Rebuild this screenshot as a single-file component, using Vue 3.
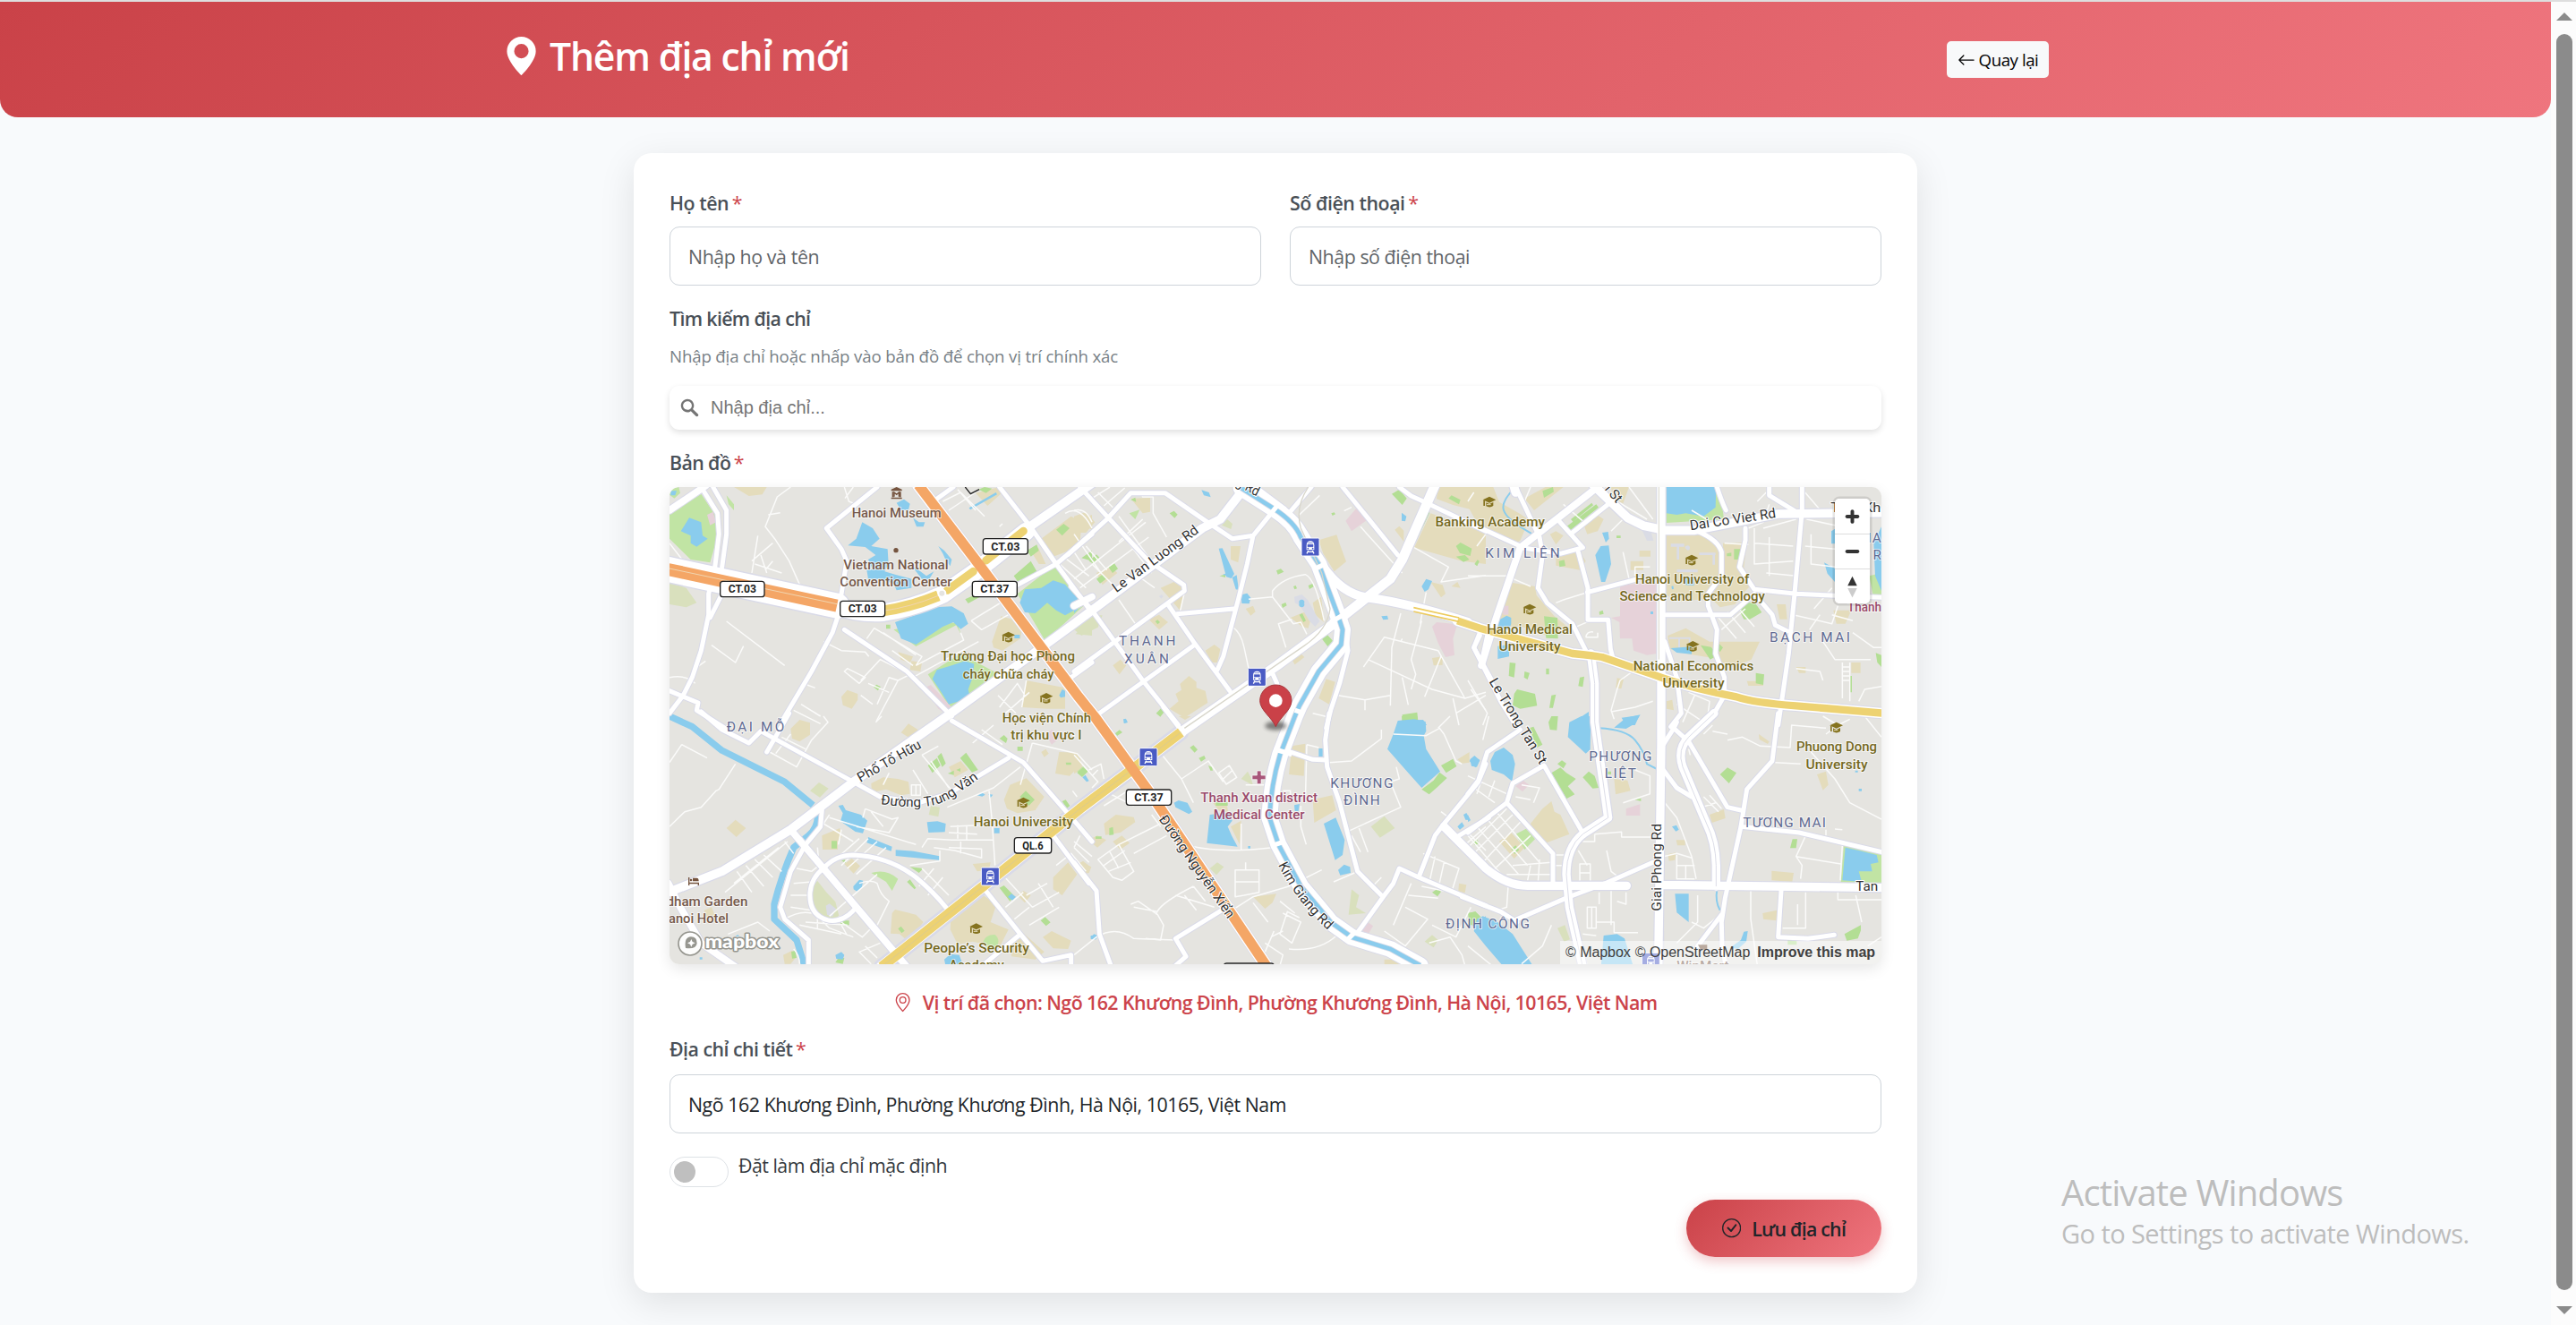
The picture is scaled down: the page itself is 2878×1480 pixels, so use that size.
<script setup>
import { ref } from 'vue'

const name = ref('')
const phone = ref('')
const query = ref('')
const detail = ref('Ngõ 162 Khương Đình, Phường Khương Đình, Hà Nội, 10165, Việt Nam')
const isDefault = ref(false)

// Map geometry is split into six tiles; dx/dy give each tile's origin.
const tiles = [
  {
    dx: 0, dy: 0,
    green: 'M24 130L130 65L180 140L190 190L160 295L95 285L24 215ZM215 70L240 100V120L222 100ZM1190 400L1315 303L1412 440L1283 557ZM890 670L1000 600L1120 665L970 790ZM775 520L850 576L985 505L1000 535L990 500L940 490ZM24 50L55 42L60 62L40 80L24 68Z',
    park: 'M1178 340L1235 290L1255 325L1200 372ZM1222 255L1255 235L1262 255L1235 275ZM1015 418L1065 395L1070 407L1025 432ZM750 503h14v14h-14zM708 712l10-8 14 8-10 12zM1320 185l25-20 20 15-25 25zM1405 280l35-25v35zM1060 50l20-8 25 5-20 15z',
    pale: 'M24 362L80 380L115 430L80 445L24 435ZM1385 535l55-55v60z',
    sand: 'M240 42H350L335 67L290 72ZM1105 560L1135 475L1210 495L1200 550L1140 590L1110 580ZM1220 690L1350 715V785H1290L1205 780ZM600 745L620 722L655 735V755L635 785L605 773ZM1270 215L1370 140L1405 160L1400 230L1350 260L1310 275ZM1390 155L1440 135V185ZM790 595L840 610L830 632L800 620ZM835 625L870 630L865 660L830 655ZM1050 62L1130 42L1140 60L1090 105ZM1240 265L1260 245L1285 300L1262 300Z',
    pink: 'M880 715L900 705L970 780L950 800L925 785ZM150 135L170 125L180 160L160 170Z',
    water: 'M62 190L90 145L130 160L135 205L152 215L115 242L95 230V205ZM622 238L650 215L670 160L705 180L728 215L700 240L755 250L758 300L745 325L780 335L835 350V380L785 388L775 365L730 350H690L685 320L705 318L690 285L715 270L680 243ZM785 95L810 83L830 98L825 118L800 120ZM840 145L860 160H880L875 175H852ZM925 240L945 255L970 285L965 307L950 287L940 265ZM835 305L865 325L885 340L910 325L895 350L870 350ZM780 495L850 470L910 445L970 442L1010 465L1025 500L1000 518L975 495L940 510L850 570L800 550ZM1198 430L1215 385L1270 380L1310 355L1350 368L1395 420L1390 450L1350 472L1320 455L1290 430L1250 465L1215 462ZM905 685L920 655L970 640L1015 625L1045 635L1040 680L1025 720L1030 740L995 760L960 770L935 730ZM28 55H48L43 70H28ZM1028 112L1118 60L1122 67L1032 118ZM1330 740L1340 720L1350 725V745L1335 748ZM1180 537h18v12h-18z',
    streets: 'M130 42L185 130L190 200L175 320L155 400L155 470L130 590L100 680L70 740L24 800M170 42L215 120L215 200L200 310M200 400L160 480M720 42L550 180L600 250L618 290L600 400L590 470L570 530L500 660L405 820M610 520L820 660L970 810M920 82L975 42M24 725L120 765L115 790L210 850M1130 42L1230 170L1320 300L1430 450M1190 370L1320 300L1440 200M1370 680L1440 630',
    minor: 'M430 42L385 75L345 175L380 220L425 290L465 380M320 205L300 330M300 290L370 230M310 300L400 330M330 270L350 330M370 290L345 320M355 135L395 128M610 42L625 90L650 100M640 42L612 80M215 492L410 640M165 572L245 630L272 575M540 560L600 590L680 595L692 610M685 550L710 515L870 610L850 640M740 530L850 605M770 590L840 640M850 640L1010 555L1000 530M840 680L1060 560M1035 490L1150 420M1035 490L1070 520L1160 470M610 660L620 650L680 680L660 700ZM665 690L730 620L830 670L790 690L760 680L720 770M665 740L705 770M690 700L760 730M790 690L718 825M485 705L512 715M440 790L530 835M465 770L530 810M940 90L1000 60L1080 140M960 120L1050 60M990 50L1050 120M1130 780L1190 700L1215 740M1150 800L1230 730M1125 740L1185 800M1220 690L1205 780M1350 130Q1400 100 1440 180M1320 290L1420 380M1350 280L1430 340M1380 260L1420 320M1130 175L1140 165M24 680Q80 670 110 700M110 650L145 625M24 230L70 290',
  },
  {
    dx: 1380, dy: 0,
    green: 'M185 130L220 118L205 150Z',
    park: 'M320 130l15-8 12 12-10 12zM50 290l25-22 10 10-22 20zM115 310l20-12 12 18-18 14zM75 350l20-15 12 15-20 15zM678 322l15-6 10 10-20 9zM1065 65l25-15 25 30-15 22zM1280 240l15-12 38 20-5 25-35-10zM1280 275l30-5 15 15-20 8zM830 550l18-14 20 22-18 18zM275 800l16-16 12 10-14 18zM1100 805l50-8 4 38-55 4zM785 372l14-6 4 10-14 8zM695 435l14-6 4 10-14 8zM735 375l8-3 4 10-8 3zM862 130l10-3 4 6-10 5zM1255 80l10-10 30 15-5 15zM755 470l10-5 12 25-8 5zM1345 300l8-12 4 5-6 14zM487 340l20-5 0 10zM190 85l15-8 3 15zM1185 122L1192 128L1138 240L1133 235ZM272 492l8-5 8 8-8 7z',
    pale: 'M495 170l18-20 18 15-5 18zM0 520L60 472H95L80 512L25 540Z',
    sand: 'M1220 42H1380V112L1350 122L1270 102L1215 82ZM1195 130L1380 195V300L1300 290L1140 245ZM820 220L880 202L890 232L912 292L872 325L835 265ZM190 80L255 78V125L230 130ZM0 140L40 125L70 160L40 195H0ZM290 380L335 360L370 385L355 455L320 415ZM75 330L125 310L145 330L95 370ZM250 485L285 470L315 495L285 520ZM440 590L470 570L490 585L480 630H462ZM130 640L155 620L175 640L152 670ZM340 735L360 722L355 702L385 675L410 695V715L440 725L448 765L370 815L320 785L350 760ZM730 620L760 600L772 612L740 637ZM820 750L845 685L875 695L855 770ZM725 480L775 460L795 480L785 515L765 510ZM1195 360L1235 370L1245 400L1230 412ZM1200 615L1235 610V638L1205 640ZM1075 185L1090 173L1105 188V225ZM525 240H558L550 295L525 285ZM575 450L600 440L608 460L592 473ZM800 430L828 410L838 495L808 470ZM1265 375L1285 360L1295 380Z',
    pink: 'M910 155L945 115L988 148L930 190ZM1200 510L1215 495L1285 502L1270 550L1275 605L1245 612L1220 565Z',
    plaza: 'M738 410L763 402L783 420L823 492L808 510L788 490L758 440L740 430ZM285 408l8-5 6 6-7 7z',
    water: 'M485 248L497 247L537 333L527 348L510 343ZM498 335L530 325V345ZM530 345L545 337L552 387L542 385ZM560 403L580 398L592 413L587 433L562 432ZM1165 375L1180 350L1200 357L1188 385L1175 393ZM427 52L452 60L458 76L435 70ZM1030 475L1050 473L1053 485L1036 487ZM1098 128L1114 140L1110 157L1098 155ZM0 400Q20 425 14 450L0 465ZM1085 840L1095 825L1170 822L1182 840ZM168 825l6-6 6 12-12 3zM755 432a9 9 0 1 1 16 0a9 9 0 1 1-16 0z',
    streets: 'M-20 268L110 150L190 62H305L440 155L530 215L600 205L665 125M600 205L580 300L550 420L500 610L480 655M20 42L110 140L250 290L368 370L370 390L0 660M-10 375L60 455L230 690L350 840M312 432L400 560L522 725M345 467L535 450M85 800L405 570M900 42L980 140L1085 270M1090 42L1130 72L1170 90L1380 190M720 130L795 42M660 655L680 700M1360 530L1340 580L1400 690M905 500L918 590L890 700L860 790L845 850',
    minor: 'M755 135L823 70M960 175L1100 330M905 122L930 110M585 418L665 410L735 500L760 495L780 535M665 410V390Q700 345 775 335Q810 350 838 490M710 580L685 500L730 485M530 510Q560 530 570 580L585 650M150 420L205 500M970 645L1040 545L1220 590L1310 750L1380 730M985 620L1200 720L1310 750M1095 465L1065 580L1060 775M1165 490L1130 620L1145 670L1130 720M885 740L975 755L1060 740M975 755V790M1100 680L1120 772M1175 745L1230 610M1140 245L1255 310L1230 360L1380 338M0 350L240 160M20 380L250 210M0 200L90 330M100 105L170 45M80 60L130 110M60 80L120 42M130 160L260 330M150 140L280 320M225 60L230 75L265 75V130L310 210M0 120Q40 110 60 160M150 225L230 150M1180 395L1160 500M800 800L850 812M1270 750L1290 840M1330 720L1380 790M270 380L200 330M355 460L370 395M870 385L890 382M1280 800L1380 740M1100 550L1095 560M40 240L110 320M60 300L130 370',
  },
  {
    dx: 2700, dy: 0,
    green: 'M665 42H845L858 150L665 162ZM1345 340L1386 330V415H1360Z',
    park: 'M330 175L430 100L438 110L342 188ZM345 150L415 95L420 103L352 158ZM868 265l15-3v12h-15zM892 250h22v35h-22zM912 460L930 430H962L985 462L945 485H925ZM255 475L300 480L302 550L262 548ZM155 735L165 720L225 735L232 775L175 785L150 773ZM140 630L160 632L155 680L137 675ZM190 660L207 665L200 687L188 680ZM262 650h10v20h-10zM375 680l15-3-5 35-15-3zM280 740l15-3-10 45h-12zM965 665l28 5-3 35-25-5zM835 560l20 20-10 15-15-15zM1367 598L1386 605V645L1372 630ZM1280 675h7v55h-7zM250 55L285 42L288 58L255 78ZM780 572L815 578L838 605L812 620ZM305 290l18-4 4 20-20 4zM22 300l10-14 6 4-8 16zM498 205h14v8h-14zM0 245L12 255L0 265ZM440 460l12-5 3 12-14 3z',
    sand: 'M0 42H85L105 92L175 132L205 152L175 222L145 237L45 187L0 107ZM665 195H795L845 235V365H940L895 435L845 445L815 415L715 425L665 405ZM855 230L935 228L925 310L945 375L885 435L855 405ZM130 360L225 375L230 405L290 475L340 515L262 540L182 510L102 508L82 478ZM670 540L730 515L810 560H978L950 620L890 645L820 615L730 600L675 585ZM275 200L295 190L320 205L295 235ZM295 260L375 258L395 290L375 320L295 305ZM385 160L425 130L455 150L435 190L400 200ZM190 80L260 42H320L222 120ZM545 290H588V320H545ZM575 255H612V275H575ZM500 682L522 686L514 718L496 715ZM1285 630H1316V665H1285ZM1225 455H1285L1265 500H1235ZM1035 435H1065L1070 485H1045ZM480 42H540L520 97L485 80ZM935 692H990V708H940ZM665 760L685 755L690 790L665 785ZM1100 645H1132V665H1110Z',
    pink: 'M480 480L510 475V370L635 362V600L600 605L555 590L550 550H510L508 495ZM115 440H136V470H118Z',
    plaza: 'M585 190L610 180L622 222L600 222ZM680 232h45v10h-45zM700 240h8v45h-8zM775 262h55v8h-55zM820 262h8v40h-8zM700 318h70v10h-70zM728 246a8 8 0 1 1 8 8zM675 545h70v6h-70zM705 551h6v28h-6zM740 545h6v25h-6z',
    water: 'M665 42H832L830 110L790 140L730 130L700 135L665 130ZM427 270L445 240L472 238L480 300L460 360H447ZM450 195L470 192L473 215L462 228ZM100 490L130 473L145 480V500L135 530H100ZM100 575L138 570V610L100 618ZM1218 190L1238 178V232H1218ZM1194 295L1230 315V360L1205 332ZM1360 230L1386 175V390L1365 340ZM725 345H758V372L728 370ZM340 840L360 825L405 795V840ZM515 815L575 807L560 840H530ZM680 582L750 577V602L700 597ZM612 459h9v9h-9zM682 375l6-2 2 10-6 2z',
    stream: 'M160 42Q110 90 120 120T200 190T235 250',
    streets: 'M160 42L240 210L250 270L235 380L265 430L350 500L400 600M0 160L175 240M300 150L385 245L310 265L180 245M350 195L470 100M370 260L402 380V487H470L478 585L485 612M400 395L570 350M1120 42V120L1095 400L1075 600L1040 840M835 42Q850 90 865 120M930 180V220L910 310L960 385L1100 400L1386 412M770 190Q840 220 850 260V340L805 400V440L835 520L830 600L860 680V740L820 810L790 840M665 470H880L960 400L1020 470L1030 505L1070 525M1010 42V70L1100 125M40 540L20 580L70 680L110 760L160 840M65 540L50 610M660 560L700 680L715 800L680 845',
    minor: 'M0 340L130 340L210 375M295 430L320 420L400 395M340 520L410 490M395 545H435V530M395 545Q400 525 420 528M500 720L510 690L580 640M500 720L480 790L490 820M480 795L560 780L620 760M700 770L790 830M740 730L810 760L800 840M760 740L720 830M940 180L990 160L1010 100M990 180L1100 150M1135 150L1230 170M1130 240L1230 250M1150 200V300L1230 310M1150 130L1230 120M960 230L1090 240M960 180V300L1090 290M1000 330L1100 340M1010 210V340M840 480L900 550M870 460L930 530M900 440L960 510M850 520L930 450M1160 450L1220 380M1145 520L1180 470M1090 470L1220 500L1240 440M1220 470L1290 490M1290 530L1360 580H1386M1190 560L1230 620H1350M1255 630V750M1280 630V760M1255 645h25M1255 660h25M1255 675h25M1255 690h25M1100 650L1180 660L1190 690M1310 760L1330 720L1386 710M0 690L65 800L50 840M540 350L520 260M320 100L390 160M480 190L540 130M450 60L600 150M540 42L620 150M20 60L0 90M30 240L60 200M560 340V310H610M210 42L190 90M970 90L1000 60M750 120L800 150M1130 60L1190 130M860 230L940 235',
  },
  {
    dx: 0, dy: 810,
    green: 'M700 525Q750 510 790 545L770 585L750 555ZM1075 755Q1085 730 1115 732Q1135 750 1120 775L1090 780Z',
    park: 'M890 165L920 140L932 165L905 190ZM922 135L935 123L950 158L938 170ZM998 140L1018 122L1058 180L1038 188ZM820 555l10-8 20 28-5 5zM830 505l45 5-15 15zM1130 575l15-8 35 35-15 18zM1198 270l20-20 30 30-20 20zM1268 685l15-12 18 18-15 12zM1390 190l20-18 17 12-20 20zM1340 285l12-5 14 20-10 8zM598 685h28v15h-28zM790 712l10-8 12 15-10 8zM567 418h18v25h-18zM432 790l13-5 5 25-15 2zM580 825l10-15 20 0-5 20zM1130 75l15-12 12 12-5 15zM957 192l20-10v15zM985 180l14-6v12zM1190 102h18v14h-18zM600 484l12-3 3 12zM1352 155h18v8h-16z',
    pale: 'M495 250L525 222L557 242L528 272ZM900 300L930 305L925 337L893 330ZM502 570L520 552L550 590L580 622L592 668L560 690L525 665L500 620Z',
    sand: 'M215 375L245 347L280 375L248 405ZM430 42L460 12L495 22V62L460 85L435 75ZM800 55L825 25L872 55L840 80ZM535 400L595 375L600 405L588 420V447H537ZM610 495L635 477L663 502L641 527ZM700 225L740 205L790 210L825 220L830 260L800 265L750 245L702 255ZM1145 280L1165 230L1220 208L1280 270L1250 315L1190 325L1155 310ZM1330 120L1390 122L1405 160L1365 200L1317 192ZM960 170L1000 150L1025 180L980 205ZM970 620L1030 570L1120 630L1100 690L1160 715L1130 775L1040 755L990 765L965 715ZM770 660L780 648L850 665L875 690L825 755L795 730L765 728ZM1175 740L1205 722L1280 790L1250 815L1170 805ZM1310 540L1360 490L1390 530L1340 600L1310 580ZM1275 740L1305 720L1370 752L1360 780L1310 778ZM1190 600L1210 585L1235 600L1215 625ZM1385 500L1410 485L1435 505L1405 530ZM1040 495L1100 490L1095 515L1055 520ZM1270 120L1285 110L1295 125L1280 137ZM140 650L165 640L182 680L155 697ZM405 800L435 785L450 805L430 830H410Z',
    pink: 'M1285 60L1305 45L1335 70L1305 95Z',
    plaza: 'M548 635L560 628L582 645L570 672L552 665ZM52 560l8-6 5 6v18l-12 2z',
    water: 'M590 300L605 297L615 315L665 330L687 350L672 392L647 387L597 352L605 325ZM690 405L770 437L767 452L685 424ZM782 448L842 452L929 469V482L782 468ZM887 355L922 352L950 360L947 388L892 390ZM640 570L660 548L673 551L668 576L653 588L641 580ZM580 800L600 790L610 800L605 815L583 813ZM945 815L965 797L995 800L1010 840H950ZM1158 605l12-10 15 10-12 12zM1112 375h18v17h-18zM1055 265l15-10 12 8-10 6zM1092 260l16 3-8 10zM1408 205l10-8 12 20-8 3zM245 738l8-6 5 6zM125 808h9v7h-9zM1436 735h8v12h-8z',
    streets: 'M130 -15L200 45L290 90L330 50L640 220L730 270M425 -10L350 120M535 315L530 370L480 430L430 520L395 640L410 680L490 750V840M650 640Q610 690 560 685Q490 670 495 590Q500 540 540 510Q580 465 640 465Q760 470 850 540Q910 590 950 640M970 15L1210 155L1380 350L1440 420M730 270L860 290L960 260L1160 140M1310 400L1430 560M1080 580L1200 730L1275 820L1370 800V840M1200 730L1080 830',
    minor: 'M65 95L150 140M65 95L24 155M24 370L75 320L130 305L180 250L190 245L245 160M360 120L450 170L500 80L555 20L540 0M400 70L480 110M380 125L430 60M250 520L300 590M280 500L340 570M310 480L370 540M340 465L400 520M240 560L390 440M210 590L420 420M560 340L850 430M560 330L540 360L640 420M680 310L770 345L790 340L760 390L650 370M680 310L672 340M700 320L740 370M600 500L690 410M620 510L720 420M650 530L750 440M580 480L660 410M600 380L590 430M870 440L890 410L970 415H1110M965 370L1060 365M990 365V410M1020 370V415M960 390L1055 395M910 440L980 450L1070 475V445L960 440M1000 420V460M955 305L1110 240L1200 170M1095 250L1105 350L1115 500M1240 90L1200 230M1240 90L1390 125L1440 180M870 130L980 260M840 180L890 260M900 150L960 240M870 130L925 100M1050 60L1120 110M1070 45L1140 95M1040 90L1110 30M830 500L930 485V450M870 510L960 600M910 510L860 570M940 540L890 600M560 670L720 530M600 690L670 740L700 710M660 560Q700 545 720 560Q730 600 760 620L720 700M450 510L500 520M440 560L500 555M430 600L490 600M430 640L500 650L560 710L640 740M480 690L620 700M520 660V715M600 700L620 735M460 700L600 730M410 420L440 460M410 680Q460 650 500 660M220 730L320 690L360 720M730 760L660 790L700 830M680 770L720 810M1130 520L1240 640M1220 600L1290 560M1240 640L1330 590M1260 560L1310 640M1180 680L1230 640M1320 500L1370 460L1420 520M1210 590L1150 640M1230 700L1330 640M835 230h30v35h-30zM850 230v35M760 190L740 230M1375 250L1390 270M930 710L980 640M520 440L525 500L500 520M440 780Q460 800 460 830M715 20L735 0',
  },
  {
    dx: 1380, dy: 810,
    green: 'M10 185L30 168L47 185L30 200Z',
    park: 'M137 58l15-12 10 8-18 12zM388 105l12-8 14 15-10 10zM418 140l18-8 5 10-15 10zM450 165l12 5 3 12-8 0zM1098 0h52v12l-50 4zM1165 245L1205 215L1225 188L1250 207L1215 240L1190 262ZM1230 165l40-22 12 25-35 22zM1200 590l18-12 12 10-12 16zM118 375l12-4 3 26-15 2zM72 403h20v8h-20zM1335 420l15-8 6 15-12 6zM1320 660L1345 655L1360 670L1350 700H1325ZM475 288h40v12h-40z',
    pale: 'M560 210L582 185L592 205L600 232ZM995 370L1040 335L1075 375L1025 407ZM930 580L955 600L945 640L978 660L920 665ZM455 510L480 490L502 505L477 532ZM1175 755L1200 733L1220 750L1205 775Z',
    sand: 'M0 130L20 140L30 180L0 192ZM730 100L775 92L770 200L720 195ZM800 280L865 265L878 315L805 357ZM525 370L560 350L555 430ZM100 360L140 330L200 338L205 355L155 390L105 398ZM130 420L160 400L186 425L155 447ZM48 415L78 400L108 415L78 440ZM600 605L678 595L665 625L640 645ZM465 290L510 288L517 322L487 318ZM20 490L58 505L50 525L35 528ZM1285 145L1325 120V155L1300 158ZM1290 560L1315 565L1310 592L1288 587ZM1040 815H1100V835H1040ZM350 0H392L372 12Z',
    pink: 'M955 710L977 685L1002 703L985 732Z',
    water: 'M335 290L350 282L380 290L396 320L385 328L340 305ZM445 425L455 330L520 322L530 350L515 370L528 400L548 437ZM583 435h8v8h-8zM820 108h13v27h-13zM738 298L756 294L752 318H740ZM837 360L877 340L907 415L900 465L875 482ZM885 515L905 497L925 505L927 525L892 533ZM1050 110L1070 60L1085 15L1140 10L1178 18L1180 50L1172 65L1180 110L1227 185L1165 240L1120 190ZM1327 145L1342 132L1360 148L1350 170L1332 167ZM1285 370L1300 355L1308 368L1293 380ZM1305 330L1315 324L1329 348L1312 347ZM55 740L67 730L79 735L74 748L62 749ZM1335 700L1380 670V755L1360 745ZM165 10l8-2 4 12-10 4z',
    plaza: 'M1130 130L1145 120L1152 150L1140 185L1128 170Z',
    streets: 'M300 -30L350 35M690 108L800 145L845 147M855 -10L842 80L848 170L890 290L950 520L1030 600M932 750L1040 600L1070 560L1090 510L1155 540L1380 635M1155 540L1210 400L1240 360L1355 220L1380 160M1290 400L1390 340M0 490L75 585L85 730L125 840M495 650L340 745L375 805L335 840',
    minor: 'M390 435Q500 460 665 440M295 130L360 210L400 290M360 210L450 150L500 220M485 190L520 165L545 205L510 228ZM500 210L532 180M575 230H640M540 515H620V590L570 600L540 605ZM540 555H620M575 490V515M560 360V450M530 650L600 605L720 570L830 515M600 625L650 690M700 660L760 690L730 760L690 730L715 655L755 675M640 760L700 800L690 835M670 720L640 790M690 620L740 660M720 780Q820 790 880 735M660 740L700 720M780 95L775 290M780 95L820 105M760 300V370L778 430M855 155L930 150L1030 75V45M920 385L1095 305L1060 220L1090 210L1080 170M930 400L960 455M955 375L985 455M870 555L940 525M1070 60L1180 65L1225 40L1240 60L1280 150L1300 160M1220 40L1260 0M1170 460L1290 510L1265 590L1165 570M1210 470L1190 560M1240 490L1220 580M1120 600L1220 610M1110 640L1185 680L1110 770L1040 720M1130 560L1070 700M1200 700L1280 740L1330 640M1190 760L1260 740L1300 800L1310 835M1300 410L1360 470M1320 390L1380 450M1300 440L1380 370M0 800L75 740Q140 700 200 745L340 750M190 630L215 620L280 665L300 700L290 750L240 745M200 640L280 655M275 665Q280 630 400 570M370 600L410 650M340 600L470 640M400 570L440 620M80 480L150 430L200 520L160 550L130 540ZM100 500L170 450M115 520L190 490M120 455L150 510M200 460L310 400M150 430L290 360M260 330L290 370M0 440L50 490M20 400L0 440M0 420L60 470M100 300L180 250M120 260L200 300M0 130L80 220L60 240M50 180L90 160L100 210M60 200L80 180M1230 320L1250 335M1000 570L1030 540M700 250H725V285',
  },
  {
    dx: 2700, dy: 810,
    green: 'M1250 557L1260 430L1386 458V560ZM160 395L195 377L225 412L190 447Z',
    park: 'M270 20L280 0H302L298 47L275 45ZM205 40L220 35L250 95L232 105ZM280 190L310 172L330 190L362 210L335 235L358 262L330 277ZM300 160l15-12 15 10-10 17zM385 205L405 185L425 200L438 240L418 242ZM15 420l12-8 10 10-12 10zM145 445l15-12 12 15-15 14zM845 195L870 172L900 190L875 225ZM1080 442L1088 412H1104L1100 442ZM1262 730L1317 700V718L1307 745L1270 752ZM560 280l20-5v10zM0 660L25 655L45 675L25 690ZM1072 750h30v16h-30zM468 185h12v10h-12z',
    pale: 'M300 710L325 700L342 748L322 755Z',
    sand: 'M210 360L250 310L280 285L290 320L310 330L340 395L260 425L212 380ZM105 420L145 390L190 440L155 477ZM490 210L535 215L545 250L495 262ZM810 330L858 312L863 342L818 357ZM1018 518L1092 525L1087 555L1018 550ZM988 660L1035 650V685L990 680ZM1170 195L1200 185L1208 230L1190 248ZM670 462L697 457L694 482L674 485ZM698 415H728V433H702ZM975 60L1010 85L1005 93L977 78Z',
    pink: 'M160 235L185 215L205 230L183 252ZM530 310L577 295V333H530Z',
    water: 'M75 150L90 120L120 105L150 130L158 160L148 218L120 195L80 180ZM5 150L20 135L40 147L25 172ZM335 70L340 20L380 0H412L410 112L395 125ZM490 38L530 5L578 -5L560 25L530 42ZM30 680L50 670L100 690L150 730L220 840H120L60 770L20 720ZM446 840L455 735L500 730L525 745L555 840ZM694 595H740V690L700 658ZM880 775L915 750L925 722L938 720L933 755L905 780ZM684 370l15-5 8 15-10 6zM1255 550L1265 440L1310 450L1370 465L1376 490L1350 495L1355 520L1310 520L1320 555ZM1298 182h9v6h-9zM1310 243h10v8h-10zM0 330l8 20-8 4z',
    plaza: 'M625 640h8v12h-8zM650 720h8v100h-8z',
    stream: 'M440 40Q530 45 560 80T600 160L640 180M835 580Q828 620 845 650',
    streets: 'M255 165L150 225L130 290L285 460V560M255 165L390 400M0 390L130 290M175 45L65 120L35 215L0 260M165 680L340 605L460 560L620 490M-20 605L110 655L165 690M655 95L690 40L740 85L870 305L915 315M690 40L700 20M655 180L700 240L750 270M1040 -10L1020 150L935 245L915 370L862 610L850 690L852 770L865 840M915 370L1110 390L1386 455M1050 585L1040 740L1140 745L1228 733M850 665L770 770',
    minor: 'M0 440L130 310M20 460L150 330M50 490L180 350M80 520L210 400M60 340L200 500M30 370L170 530M95 320L240 490M0 400L120 540M210 500L200 550M240 480L235 560M150 500L280 490M130 530L280 530M290 465H325M290 500H325M0 200L130 260M20 240L90 290M50 200L30 260M90 215L70 270M180 230L240 240L220 290M160 270L210 280M425 395L515 388V405H615M385 420H425V395M375 495H410V555H375ZM375 525h35M465 450L480 520L500 535M370 450L400 500M440 590V630M530 590V630L500 620M400 640h30v70h-30zM415 640v70M430 690H490V725H570M480 580V700M660 290L700 340L750 470L765 545M700 465V545H760M700 500h60M730 500v45M655 470L700 460L750 475M1030 155L1115 160M870 80L920 70L980 100L1080 105L1085 30L1200 40M1200 60L1240 30L1280 10M1150 120L1230 210L1280 290L1386 345M1130 405L1100 470L1120 500L1115 545M1200 380V400M1230 378L1255 380M1100 470L1250 495M1255 430L1248 550M948 580V680L970 835M1132 590V710H1055M1105 630V700M1240 580V615H1386M1300 600L1320 690M790 270L840 320M760 290L800 340M810 265L850 310M770 310L830 290M820 50L870 60M820 30L790 60M740 110L745 130M520 290L610 260V200L560 180M135 570L130 640L100 650M180 830L250 770L280 700M700 760L770 690V600M750 690L790 710L840 670M370 720L400 835M385 730L430 735M1340 770L1386 740M70 0L50 80M0 770L80 835M1190 0L1240 30M1330 0L1386 70',
  },
]

const layers = ['pale', 'sand', 'green', 'park', 'pink', 'plaza', 'water']

const roads = {
  white: 'M24 120L145 38M1380 440L1440 410',
  wide: 'M2010 -10L1940 60L1870 150L1810 180L1380 500L1250 595L960 805L640 1030L430 1190L200 1330L20 1400',
  diag: 'M430 1190L820 1650M20 1370L60 1450L130 1570L245 1650',
  link: 'M1210 190L1440 30M2840 -10L2860 60',
  right: 'M3120 35L3235 145L3290 172L3360 187H3460L3740 132L4090 128',
  tonThat: 'M3150 30L2875 245L2795 480L2745 640',
  tanMai: 'M2620 1180L2760 1320Q2830 1378 2900 1378H3232M3350 1375L4090 1385',
  river: 'M1940 45L2050 115Q2120 160 2140 210L2200 300L2260 460L2280 520L2275 570L2200 660L2135 775L2120 810L2070 940Q2040 1040 2035 1150L2065 1240L2140 1380Q2200 1450 2240 1500L2310 1550L2440 1590L2540 1645',
  ringWest: 'M1960 30L2080 120L2150 200L2215 310Q2280 400 2360 412Q2500 430 2700 495',
  ring: 'M2665 490L2740 515L3050 600Q3110 605 3150 612L3320 670Q3440 715 3600 745Q3660 765 3800 775L4090 800',
  ql6: 'M735 1650L1100 1360L1400 1120L1560 1000L1738 864',
  ql6East: 'M1738 864L2060 640L2250 500L2440 350L2480 285L2590 35',
  rail: 'M1750 850L2150 575Q2230 520 2238 450L2210 330L2140 180Q2120 110 2165 42',
  ct37: 'M858 35L1060 300L1395 745L1455 820L1640 1075L2030 1655',
  ct03: 'M20 318L585 440',
  ct03East: 'M585 440Q650 468 740 463Q850 445 940 402L1050 325L1220 190',
  giaiPhong: 'M3348 30V900L3338 1650',
  dual: 'M3112 600L3125 700V830L3170 1150L3085 1205Q3030 1250 3030 1340L3040 1450L3085 1650M3525 800L3440 880Q3400 920 3420 980L3500 1170Q3530 1230 3532 1310V1380',
}

const labels = [
  ['poi', 785, 145, 300, 'Hanoi Museum'],
  ['poi', 783, 319, 352, 'Vietnam National'],
  ['poi', 783, 376, 376, 'Convention Center'],
  ['edu', 1158, 625, 450, 'Trường Đại học Phòng'],
  ['edu', 1160, 683, 305, 'cháy chữa cháy'],
  ['edu', 1288, 831, 298, 'Học viện Chính'],
  ['edu', 1287, 888, 238, 'trị khu vực I'],
  ['edu', 1210, 1180, 334, 'Hanoi University'],
  ['edu', 1053, 1602, 353, 'People’s Security'],
  ['edu', 1053, 1660, 185, 'Academy'],
  ['edu', 2774, 173, 367, 'Banking Academy'],
  ['edu', 3452, 366, 382, 'Hanoi University of'],
  ['edu', 3452, 424, 487, 'Science and Technology'],
  ['edu', 2907, 533, 287, 'Hanoi Medical'],
  ['edu', 2907, 591, 207, 'University'],
  ['edu', 3456, 656, 404, 'National Economics'],
  ['edu', 3456, 714, 207, 'University'],
  ['edu', 3936, 928, 270, 'Phuong Dong'],
  ['edu', 3936, 986, 207, 'University'],
  ['med', 2000, 1097, 392, 'Thanh Xuan district'],
  ['med', 2000, 1155, 306, 'Medical Center'],
  ['med', 4029, 458, 114, 'Thanh'],
  ['poi', 106, 1445, 360, 'Wyndham Garden'],
  ['poi', 106, 1503, 232, 'Hanoi Hotel'],
  ['poi', 3487, 1662, 175, 'WinMart'],
  ['area', 1625, 572, 190, 'THANH'],
  ['area', 1623, 632, 150, 'XUÂN'],
  ['area', 2883, 279, 250, 'KIM LIÊN'],
  ['area', 3846, 562, 270, 'BẠCH MAI'],
  ['area', 2344, 1050, 210, 'KHƯƠNG'],
  ['area', 2344, 1107, 122, 'ĐÌNH'],
  ['area', 2766, 1522, 282, 'ĐỊNH CÔNG'],
  ['area', 3211, 960, 210, 'PHƯƠNG'],
  ['area', 3211, 1018, 106, 'LIỆT'],
  ['area', 3761, 1181, 277, 'TƯƠNG MAI'],
  ['area', 312, 862, 194, 'ĐẠI MỖ'],
  ['area', 4052, 227, 66, 'HA'],
  ['area', 4072, 285, 52, 'R'],
  ['road', 4037, 1395, 75, 'Tan'],
  ['road', 4000, 127, 168, 'Trần Kh'],
]

// start x, baseline y, rotation, length, text
const streetNames = [
  [1522, 397, -36.2, 345, 'Le Van Luong Rd'],
  [3446, 187, -8.5, 291, 'Dai Co Viet Rd'],
  [3347, 1463, -90, 293, 'Giai Phong Rd'],
  [664, 1032, -29.5, 238, 'Phố Tố Hữu'],
  [1663, 1155, 55.2, 408, 'Đường Nguyễn Xiển'],
  [2770, 694, 58.5, 328, 'Le Trong Tan St'],
  [3148, 38, 50, 78, 'n St'],
  [1900, 26, 27, 104, 'ng Rd'],
]

const shields = [
  [194, 358, 148, 'CT.03'],
  [596, 424, 150, 'CT.03'],
  [1075, 215, 150, 'CT.03'],
  [1039, 358, 150, 'CT.37'],
  [1555, 1056, 151, 'CT.37'],
  [1180, 1217, 124, 'QL.6'],
]
const caps = [[1160, 545], [1287, 750], [1210, 1100], [1052, 1522], [2772, 92], [3450, 287], [2907, 452], [3454, 576], [3935, 848]]
const trains = [[2142, 213], [1963, 649], [1599, 917], [1069, 1317], [3283, 1603]]
</script>

<template>
  <div class="screen">
    <div class="page">
      <header class="header">
        <div class="header-inner">
          <h1 class="title">
            <svg class="title-icon" viewBox="0 0 16 16" fill="currentColor"><path d="M8 16s6-5.686 6-10A6 6 0 0 0 2 6c0 4.314 6 10 6 10m0-7a3 3 0 1 1 0-6 3 3 0 0 1 0 6" /></svg>
            <span>Thêm địa chỉ mới</span>
          </h1>
          <button class="back" type="button">
            <svg viewBox="0 0 16 16" fill="currentColor"><path fill-rule="evenodd" d="M15 8a.5.5 0 0 0-.5-.5H2.707l3.147-3.146a.5.5 0 1 0-.708-.708l-4 4a.5.5 0 0 0 0 .708l4 4a.5.5 0 0 0 .708-.708L2.707 8.5H14.5A.5.5 0 0 0 15 8" /></svg>
            <span>Quay lại</span>
          </button>
        </div>
      </header>

      <main class="card">
        <div class="row">
          <div class="field">
            <label class="label ls-name">Họ tên <i>*</i></label>
            <input v-model="name" class="input ls-ph-name" placeholder="Nhập họ và tên">
          </div>
          <div class="field">
            <label class="label ls-phone">Số điện thoại <i>*</i></label>
            <input v-model="phone" class="input ls-ph-phone" placeholder="Nhập số điện thoại">
          </div>
        </div>

        <label class="label search-label">Tìm kiếm địa chỉ</label>
        <p class="hint">Nhập địa chỉ hoặc nhấp vào bản đồ để chọn vị trí chính xác</p>
        <div class="search">
          <svg viewBox="0 0 18 18"><path d="M7.4 2.5c-2.7 0-4.9 2.2-4.9 4.9s2.2 4.9 4.9 4.9c1 0 1.8-.2 2.5-.8l3.7 3.7c.2.2.4.3.8.3.7 0 1.1-.4 1.1-1.1 0-.3-.1-.5-.3-.8L11.4 10c.4-.8.8-1.6.8-2.5.1-2.8-2.1-5-4.8-5zm0 1.6c1.8 0 3.2 1.4 3.2 3.2s-1.4 3.2-3.2 3.2-3.3-1.3-3.3-3.1 1.4-3.3 3.3-3.3z" /></svg>
          <input v-model="query" placeholder="Nhập địa chỉ...">
        </div>

        <label class="label map-label">Bản đồ <i>*</i></label>
        <div class="map">
          <svg class="map-canvas" viewBox="24 42 4062 1599" preserveAspectRatio="none">
            <defs>
              <g id="cap">
                <path d="M-22 -7L0 -18L22 -7L0 3Z" /><path d="M-20 -6V13H-15V-4Z" />
                <path d="M-11 2L0 7L13 1V13Q1 21 -11 14Z" /><path d="M-9 9H5" stroke="#e4dcbc" stroke-width="3" />
              </g>
              <g id="train">
                <rect width="60" height="60" rx="4" fill="#4a5bc4" stroke="#fff" stroke-width="3" />
                <path d="M17 40V25Q17 10 30 10Q43 10 43 25V40Z" fill="#fff" /><path d="M22 16H38M21 22H39V29H21Z" fill="#4a5bc4" stroke="#4a5bc4" stroke-width="2" />
                <circle cx="22" cy="35" r="2.6" fill="#4a5bc4" /><circle cx="38" cy="35" r="2.6" fill="#4a5bc4" />
                <path d="M23 42L18 52M37 42L42 52M21 46H39" stroke="#fff" stroke-width="4" fill="none" />
              </g>
              <path id="trung-van" d="M731 1105C830 1116 905 1125 975 1080Q1030 1042 1095 995" />
              <path id="kim-giang" d="M2064 1308Q2125 1435 2250 1544" />
              <filter id="soft" x="-50%" y="-50%" width="200%" height="200%"><feGaussianBlur stdDeviation="7" /></filter>
            </defs>
            <rect x="0" y="0" width="4200" height="1700" fill="#e5e4e0" />
            <g v-for="layer in layers" :key="layer">
              <path v-for="(t, i) in tiles" :key="i" :class="layer" :d="t[layer]" :transform="`translate(${t.dx} ${t.dy})`" />
            </g>
            <g fill="none" stroke-linejoin="round">
              <path d="M20 808L100 845L200 925L320 985L410 1030L505 1108" class="canal" />
              <path d="M520 1130Q525 1180 490 1210L440 1250Q400 1340 375 1440V1490L450 1560L478 1650" class="canal" />
              <path v-for="(t, i) in tiles" :key="'m' + i" class="minor" :d="t.minor" :transform="`translate(${t.dx} ${t.dy})`" />
              <path v-for="(t, i) in tiles" :key="'w' + i" class="stream" :d="t.stream" :transform="`translate(${t.dx} ${t.dy})`" />
              <g class="casing">
                <path v-for="(t, i) in tiles" :key="'c' + i" stroke-width="21" :d="t.streets" :transform="`translate(${t.dx} ${t.dy})`" />
                <path stroke-width="36" :d="roads.wide + roads.link + roads.ringWest + roads.right" />
                <path stroke-width="29" :d="roads.diag + roads.white + roads.tonThat" />
                <path stroke-width="35" :d="roads.tanMai + roads.dual + roads.giaiPhong" />
                <path stroke-width="38" :d="roads.ql6East" />
                <path stroke-width="60" :d="roads.river" />
                <path stroke-width="92" :d="roads.ct03" />
                <path stroke-width="66" :d="roads.ct03East" />
                <path stroke-width="46" :d="roads.ct37" />
                <path stroke-width="54" :d="roads.ql6" />
                <path stroke-width="40" :d="roads.ring" />
              </g>
              <g class="fill">
                <path v-for="(t, i) in tiles" :key="'f' + i" stroke-width="15" :d="t.streets" :transform="`translate(${t.dx} ${t.dy})`" />
                <path stroke-width="29" :d="roads.wide + roads.link + roads.right" />
                <path stroke-width="23" :d="roads.diag + roads.white + roads.tonThat" />
                <path stroke-width="28" :d="roads.tanMai + roads.dual + roads.giaiPhong" />
                <path stroke-width="54" :d="roads.river" />
                <path stroke-width="30" :d="roads.ringWest" />
                <path stroke-width="32" :d="roads.ql6East" />
                <path stroke-width="84" :d="roads.ct03" />
                <path stroke-width="58" :d="roads.ct03East" />
                <path stroke-width="38" :d="roads.ql6" />
                <path stroke-width="34" :d="roads.ring" />
                <path stroke-width="42" :d="roads.ct37" />
              </g>
              <path :d="roads.river" stroke="#dcdde8" stroke-width="19" />
              <path :d="roads.river" stroke="#8acced" stroke-width="14" />
              <path :d="roads.dual" stroke="#dcdde8" stroke-width="3" />
              <path :d="roads.rail" stroke="#d8d6cb" stroke-width="4" />
              <path d="M3340 42V620" stroke="#d8d6cb" stroke-width="3" />
              <path :d="roads.ql6" stroke="#edd272" stroke-width="34" />
              <path :d="roads.ql6" stroke="#dccb8f" stroke-width="3" />
              <path :d="roads.ring" stroke="#edd272" stroke-width="25" />
              <path d="M2518 446L2670 480M2518 459L2670 493" stroke="#edcb5c" stroke-width="5" />
              <path d="M740 457Q830 445 925 406" stroke="#edd272" stroke-width="36" />
              <path d="M955 388L1042 325M1085 288L1210 190" stroke="#edd272" stroke-width="27" stroke-linecap="round" />
              <path :d="roads.ct03" stroke="#f4a666" stroke-width="42" />
              <path d="M24 315L585 434M740 457Q830 445 925 406" stroke="#f0d5b0" stroke-width="3" />
              <path :d="roads.ct37" stroke="#f4a666" stroke-width="34" />
              <circle cx="937" cy="398" r="12" fill="#e5e4e0" stroke="#fff" stroke-width="6" />
              <path d="M2050 920L2110 938M2040 1245L2078 1232M2040 130L2065 100M2190 315L2215 303M2120 790L2150 800M2290 1565L2325 1530M2240 495L2300 460" stroke="#fff" stroke-width="16" />
              <path d="M1015 42L1033 65L1062 50" stroke="#222" stroke-width="4" />
              <rect x="1882" y="1638" width="168" height="52" rx="9" fill="#fff" stroke="#222" stroke-width="4" />
            </g>

            <g fill="#85731f"><use v-for="(c, i) in caps" :key="i" href="#cap" :x="c[0]" :y="c[1]" /></g>
            <g fill="#75543f">
              <path d="M767 50L785 42L803 50V55H767ZM770 58H776V76H770ZM794 58H800V76H794ZM767 77H803V82H767Z" />
              <path d="M777 74V60L785 67L793 60V74" fill="none" stroke="#75543f" stroke-width="4" />
              <circle cx="783" cy="254" r="8" />
              <path d="M87 1350H91V1367H123V1377H119V1372H91V1377H87ZM102 1352H116Q122 1353 122 1363H102Z" /><circle cx="96" cy="1359" r="4" />
              <path d="M3471 1576H3502V1592H3480Z" />
            </g>
            <path d="M1993 993H2007V1008H2022V1022H2007V1037H1993V1022H1977V1008H1993Z" fill="#a8567a" stroke="#fff" stroke-width="2" />

            <text v-for="(l, i) in labels" :key="'l' + i" :class="['lbl', l[0]]" :x="l[1]" :y="l[2]" :textLength="l[3]" :lengthAdjust="l[0] === 'area' ? 'spacing' : 'spacingAndGlyphs'" text-anchor="middle">{{ l[4] }}</text>
            <text v-for="(s, i) in streetNames" :key="'s' + i" class="lbl road" :transform="`translate(${s[0]} ${s[1]}) rotate(${s[2]})`" :textLength="s[3]" lengthAdjust="spacingAndGlyphs">{{ s[4] }}</text>
            <text class="lbl road"><textPath href="#trung-van">Đường Trung Văn</textPath></text>
            <text class="lbl road"><textPath href="#kim-giang">Kim Giang Rd</textPath></text>

            <use v-for="(t, i) in trains" :key="'t' + i" href="#train" :x="t[0]" :y="t[1]" />
            <g v-for="(s, i) in shields" :key="'h' + i">
              <rect :x="s[0]" :y="s[1]" :width="s[2]" height="52" rx="9" fill="#fff" stroke="#222" stroke-width="4" />
              <text class="shield" :x="s[0] + s[2] / 2" :y="s[1] + 39" :textLength="s[2] - 54" lengthAdjust="spacingAndGlyphs" text-anchor="middle">{{ s[3] }}</text>
            </g>

            <ellipse cx="2056" cy="842" rx="36" ry="15" fill="#000" opacity=".45" filter="url(#soft)" />
            <path d="M2056 845C2044 815 2003 790 2003 758A53 53 0 0 1 2109 758C2109 790 2068 815 2056 845Z" fill="#ca4148" stroke="#a9363c" stroke-width="3" />
            <circle cx="2056" cy="758" r="22" fill="#fff" />

            <g>
              <circle cx="93" cy="1572" r="39" fill="#fff" fill-opacity=".9" stroke="#96968f" stroke-width="5" />
              <path d="M78 1587Q72 1550 96 1549Q117 1550 116 1571Q113 1592 78 1587Z" fill="#96968f" />
              <path d="M97 1557L101 1566L110 1570L101 1574L97 1583L93 1574L84 1570L93 1566Z" fill="#fff" />
              <text class="wordmark" x="143" y="1588" textLength="248" lengthAdjust="spacingAndGlyphs">mapbox</text>
            </g>
          </svg>
          <div class="zoom">
            <button type="button"><svg viewBox="0 0 29 29"><path d="M14.5 8.5c-.75 0-1.5.75-1.5 1.5v3h-3c-.75 0-1.5.75-1.5 1.5S9.250 16 10 16h3v3c0 .75.75 1.500 1.500 1.500S16 19.750 16 19v-3h3c.75 0 1.500-.75 1.500-1.500S19.750 13 19 13h-3v-3c0-.75-.75-1.500-1.500-1.500z" /></svg></button>
            <button type="button"><svg viewBox="0 0 29 29"><path d="M10 13c-.75 0-1.500.75-1.500 1.500S9.250 16 10 16h9c.75 0 1.500-.75 1.500-1.500S19.750 13 19 13h-9z" /></svg></button>
            <button type="button"><svg viewBox="0 0 29 29"><path d="M10.500 14l4-8 4 8h-8z" /><path d="M10.500 16l4 8 4-8h-8z" fill="#ccc" /></svg></button>
          </div>
          <div class="attribution"><span>© Mapbox</span><span>© OpenStreetMap</span><b>Improve this map</b></div>
        </div>

        <p class="selected">
          <svg viewBox="0 0 16 16" fill="currentColor"><path d="M12.166 8.940c-.524 1.062-1.234 2.120-1.960 3.070A32 32 0 0 1 8 14.580a32 32 0 0 1-2.206-2.570c-.726-.950-1.436-2.008-1.960-3.070C3.304 7.867 3 6.862 3 6a5 5 0 0 1 10 0c0 .862-.305 1.867-.834 2.940M8 16s6-5.686 6-10A6 6 0 0 0 2 6c0 4.314 6 10 6 10" /><path d="M8 8a2 2 0 1 1 0-4 2 2 0 0 1 0 4m0 1a3 3 0 1 0 0-6 3 3 0 0 0 0 6" /></svg>
          <span>Vị trí đã chọn: Ngõ 162 Khương Đình, Phường Khương Đình, Hà Nội, 10165, Việt Nam</span>
        </p>

        <label class="label detail-label">Địa chỉ chi tiết <i>*</i></label>
        <input v-model="detail" class="input ls-detail">

        <div class="default">
          <button type="button" class="switch" :class="{ on: isDefault }" @click="isDefault = !isDefault"><span /></button>
          <span class="default-text">Đặt làm địa chỉ mặc định</span>
        </div>

        <div class="actions">
          <button type="button" class="save">
            <svg viewBox="0 0 16 16" fill="currentColor"><path d="M8 15A7 7 0 1 1 8 1a7 7 0 0 1 0 14m0 1A8 8 0 1 0 8 0a8 8 0 0 0 0 16" /><path d="m10.970 4.970-.020.022-3.473 4.425-2.093-2.094a.75.75 0 0 0-1.060 1.060L6.970 11.030a.75.75 0 0 0 1.079-.020l3.992-4.990a.75.75 0 0 0-1.071-1.050" /></svg>
            <span>Lưu địa chỉ</span>
          </button>
        </div>
      </main>
    </div>

    <aside class="scrollbar"><span class="arrow up" /><span class="thumb" /><span class="arrow down" /></aside>

    <div class="watermark">
      <p class="wm-title">Activate Windows</p>
      <p class="wm-text">Go to Settings to activate Windows.</p>
    </div>
  </div>
</template>

<style>
body { margin: 0; background: #f8fafc; }
</style>

<style scoped>
* { box-sizing: border-box; }
.screen { position: relative; display: flex; width: 2878px; height: 1480px; overflow: hidden; border-top: 2px solid #dedede; background: #f8fafc; font-family: "Open Sans", "Noto Sans", sans-serif; font-size: 21.33px; color: #212529; }
.page { width: 2850px; }
p, h1 { margin: 0; }
button, input { font: inherit; border: 0; margin: 0; padding: 0; }

.header { height: 129px; border-radius: 0 0 20px 20px; background: linear-gradient(135deg, #ca4248, #ef757e); }
.header-inner { width: 1728px; margin: 0 auto; padding-top: 33px; display: flex; justify-content: space-between; align-items: flex-start; }
.title { display: flex; color: #fff; font-size: 42.67px; font-weight: 600; line-height: 56px; letter-spacing: -1.18px; }
.title-icon { width: 43px; height: 43px; margin: 6px 10px 0 0; }
.back { margin: 11px 0 0; width: 114px; height: 41px; border-radius: 5px; background: #f8f9fa; color: #000; font-size: 18.67px; letter-spacing: -.44px; display: flex; align-items: center; justify-content: center; gap: 4px; }
.back svg { width: 20px; height: 20px; }

.card { width: 1434px; height: 1273px; margin: 40px auto 0; padding: 40px; border-radius: 20px; background: #fff; box-shadow: 0 11px 40px rgba(0, 0, 0, .1); }
.row { display: flex; gap: 32px; }
.field { flex: 1; }
.label { display: block; height: 32px; line-height: 32px; font-weight: 600; color: #495057; white-space: pre; }
.label i { margin-left: -1.500px; font-style: normal; color: #cc444b; font-weight: 400; }
.ls-name { letter-spacing: -.45px; }
.ls-phone { letter-spacing: -.45px; }
.search-label { margin-top: 21px; letter-spacing: -.64px; }
.map-label { margin-top: 21px; margin-bottom: 11px; letter-spacing: -.6px; }
.detail-label { margin-top: 20px; letter-spacing: -.52px; }
.input { display: block; width: 100%; height: 66px; margin-top: 10px; padding: 0 20px; border: 1px solid #ced4da; border-radius: 11px; background: #fff; color: #212529; outline: none; }
.input::placeholder { color: #5f6468; opacity: 1; }
.ls-ph-name { letter-spacing: -.4px; }
.ls-ph-phone { letter-spacing: -.44px; }
.ls-detail { margin-top: 12px; letter-spacing: -.435px; }
.hint { margin-top: 12px; height: 28px; line-height: 28px; font-size: 18.67px; letter-spacing: -.16px; color: #787f86; }
.search { margin-top: 19px; height: 49px; padding-left: 9px; border-radius: 11px; display: flex; align-items: center; background: #fff; box-shadow: 0 3px 7px rgba(0, 0, 0, .12); }
.search svg { width: 27px; height: 27px; fill: #757575; }
.search input { flex: 1; margin-left: 10px; background: none; outline: none; font-family: "Liberation Sans", sans-serif; font-size: 20px; color: #333; }
.search input::placeholder { color: #757575; opacity: 1; }

.map { position: relative; height: 533px; border-radius: 11px; overflow: hidden; box-shadow: 0 5px 16px rgba(0, 0, 0, .1); }
.map-canvas { display: block; width: 100%; height: 100%; }
.pale { fill: #d9e0bd; }
.sand { fill: #e4dcbc; }
.green { fill: #c1e4a4; }
.park { fill: #b3de94; }
.pink { fill: #e6d2d9; }
.plaza { fill: #dadce5; }
.water { fill: #8acced; }
.canal { stroke: #8acced; stroke-width: 22; }
.stream { stroke: #8acced; stroke-width: 6; }
.minor { stroke: #fbfbfa; stroke-width: 4.500; }
.casing { stroke: #d9dae8; stroke-linecap: round; }
.fill { stroke: #fff; stroke-linecap: round; }
.lbl { font-family: Roboto, "Liberation Sans", sans-serif; font-size: 46px; font-weight: 500; paint-order: stroke; stroke: rgba(255, 255, 255, .7); stroke-width: 6px; stroke-linejoin: round; }
.poi { fill: #75594a; }
.edu { fill: #75691f; }
.med { fill: #9a4a6a; }
.area { fill: #5f6a92; font-weight: 400; }
.road { fill: #333; font-weight: 400; stroke: #fff; }
.shield { font-family: Roboto, "Liberation Sans", sans-serif; font-size: 37px; font-weight: 700; fill: #222; }
.wordmark { font-family: Lato, sans-serif; font-size: 62px; font-weight: 900; fill: #fff; stroke: #96968f; stroke-width: 9px; paint-order: stroke; stroke-linejoin: round; }
.zoom { position: absolute; top: 13px; right: 13px; width: 39px; border-radius: 5px; overflow: hidden; background: #fff; box-shadow: 0 0 0 2.500px rgba(0, 0, 0, .1); }
.zoom button { display: block; width: 39px; height: 39px; background: #fff; }
.zoom button + button { border-top: 1px solid #ddd; }
.zoom svg { display: block; width: 39px; height: 38px; fill: #333; }
.attribution { position: absolute; right: 0; bottom: 0; width: 359px; height: 26px; padding: 0 7px 0 6px; display: flex; justify-content: space-between; align-items: center; background: rgba(255, 255, 255, .5); font-family: "Liberation Sans", sans-serif; font-size: 16px; letter-spacing: -.05px; color: #404040; }
.attribution b { margin-left: 3px; }

.selected { margin-top: 27px; height: 32px; display: flex; align-items: center; justify-content: center; gap: 11px; color: #cc444b; font-weight: 600; line-height: 32px; letter-spacing: -.557px; white-space: nowrap; }
.selected svg { width: 21.300px; height: 21.300px; }

.default { margin-top: 20px; height: 40px; display: flex; align-items: flex-start; gap: 11px; }
.switch { width: 66px; height: 34px; margin-top: 6px; padding: 0 4px; display: flex; align-items: center; border: 1px solid #dee2e6; border-radius: 17px; background: #fff; }
.switch span { width: 24px; height: 24px; border-radius: 50%; background: #bfbfbf; }
.switch.on { justify-content: flex-end; }
.default-text { line-height: 32px; letter-spacing: -.5px; color: #33383d; }
.actions { margin-top: 14px; display: flex; justify-content: flex-end; }
.save { width: 218px; height: 64px; border-radius: 32px; display: flex; align-items: center; justify-content: center; gap: 12px; background: linear-gradient(135deg, #ca4248, #ef757e); box-shadow: 0 5px 14px rgba(204, 68, 75, .3); color: #212529; font-weight: 600; letter-spacing: -.76px; }
.save svg { width: 21.300px; height: 21.300px; }

.scrollbar { width: 28px; height: 1478px; padding: 12px 4px 12px 6px; display: flex; flex-direction: column; align-items: center; background: #fcfcfc; }
.thumb { flex: 1; width: 18px; margin: 15px 0 18px; border-radius: 9px; background: #8b8b8b; }
.arrow { border: 9px solid transparent; border-top: 0; border-bottom: 9px solid #8b8b8b; }
.arrow.down { border-bottom: 0; border-top: 9px solid #8b8b8b; }

.watermark { position: absolute; left: 2303px; top: 1300px; color: #bdbdbd; }
.wm-title { font-size: 40px; line-height: 60px; letter-spacing: -.86px; }
.wm-text { font-size: 29px; line-height: 32px; letter-spacing: -.56px; }
</style>
